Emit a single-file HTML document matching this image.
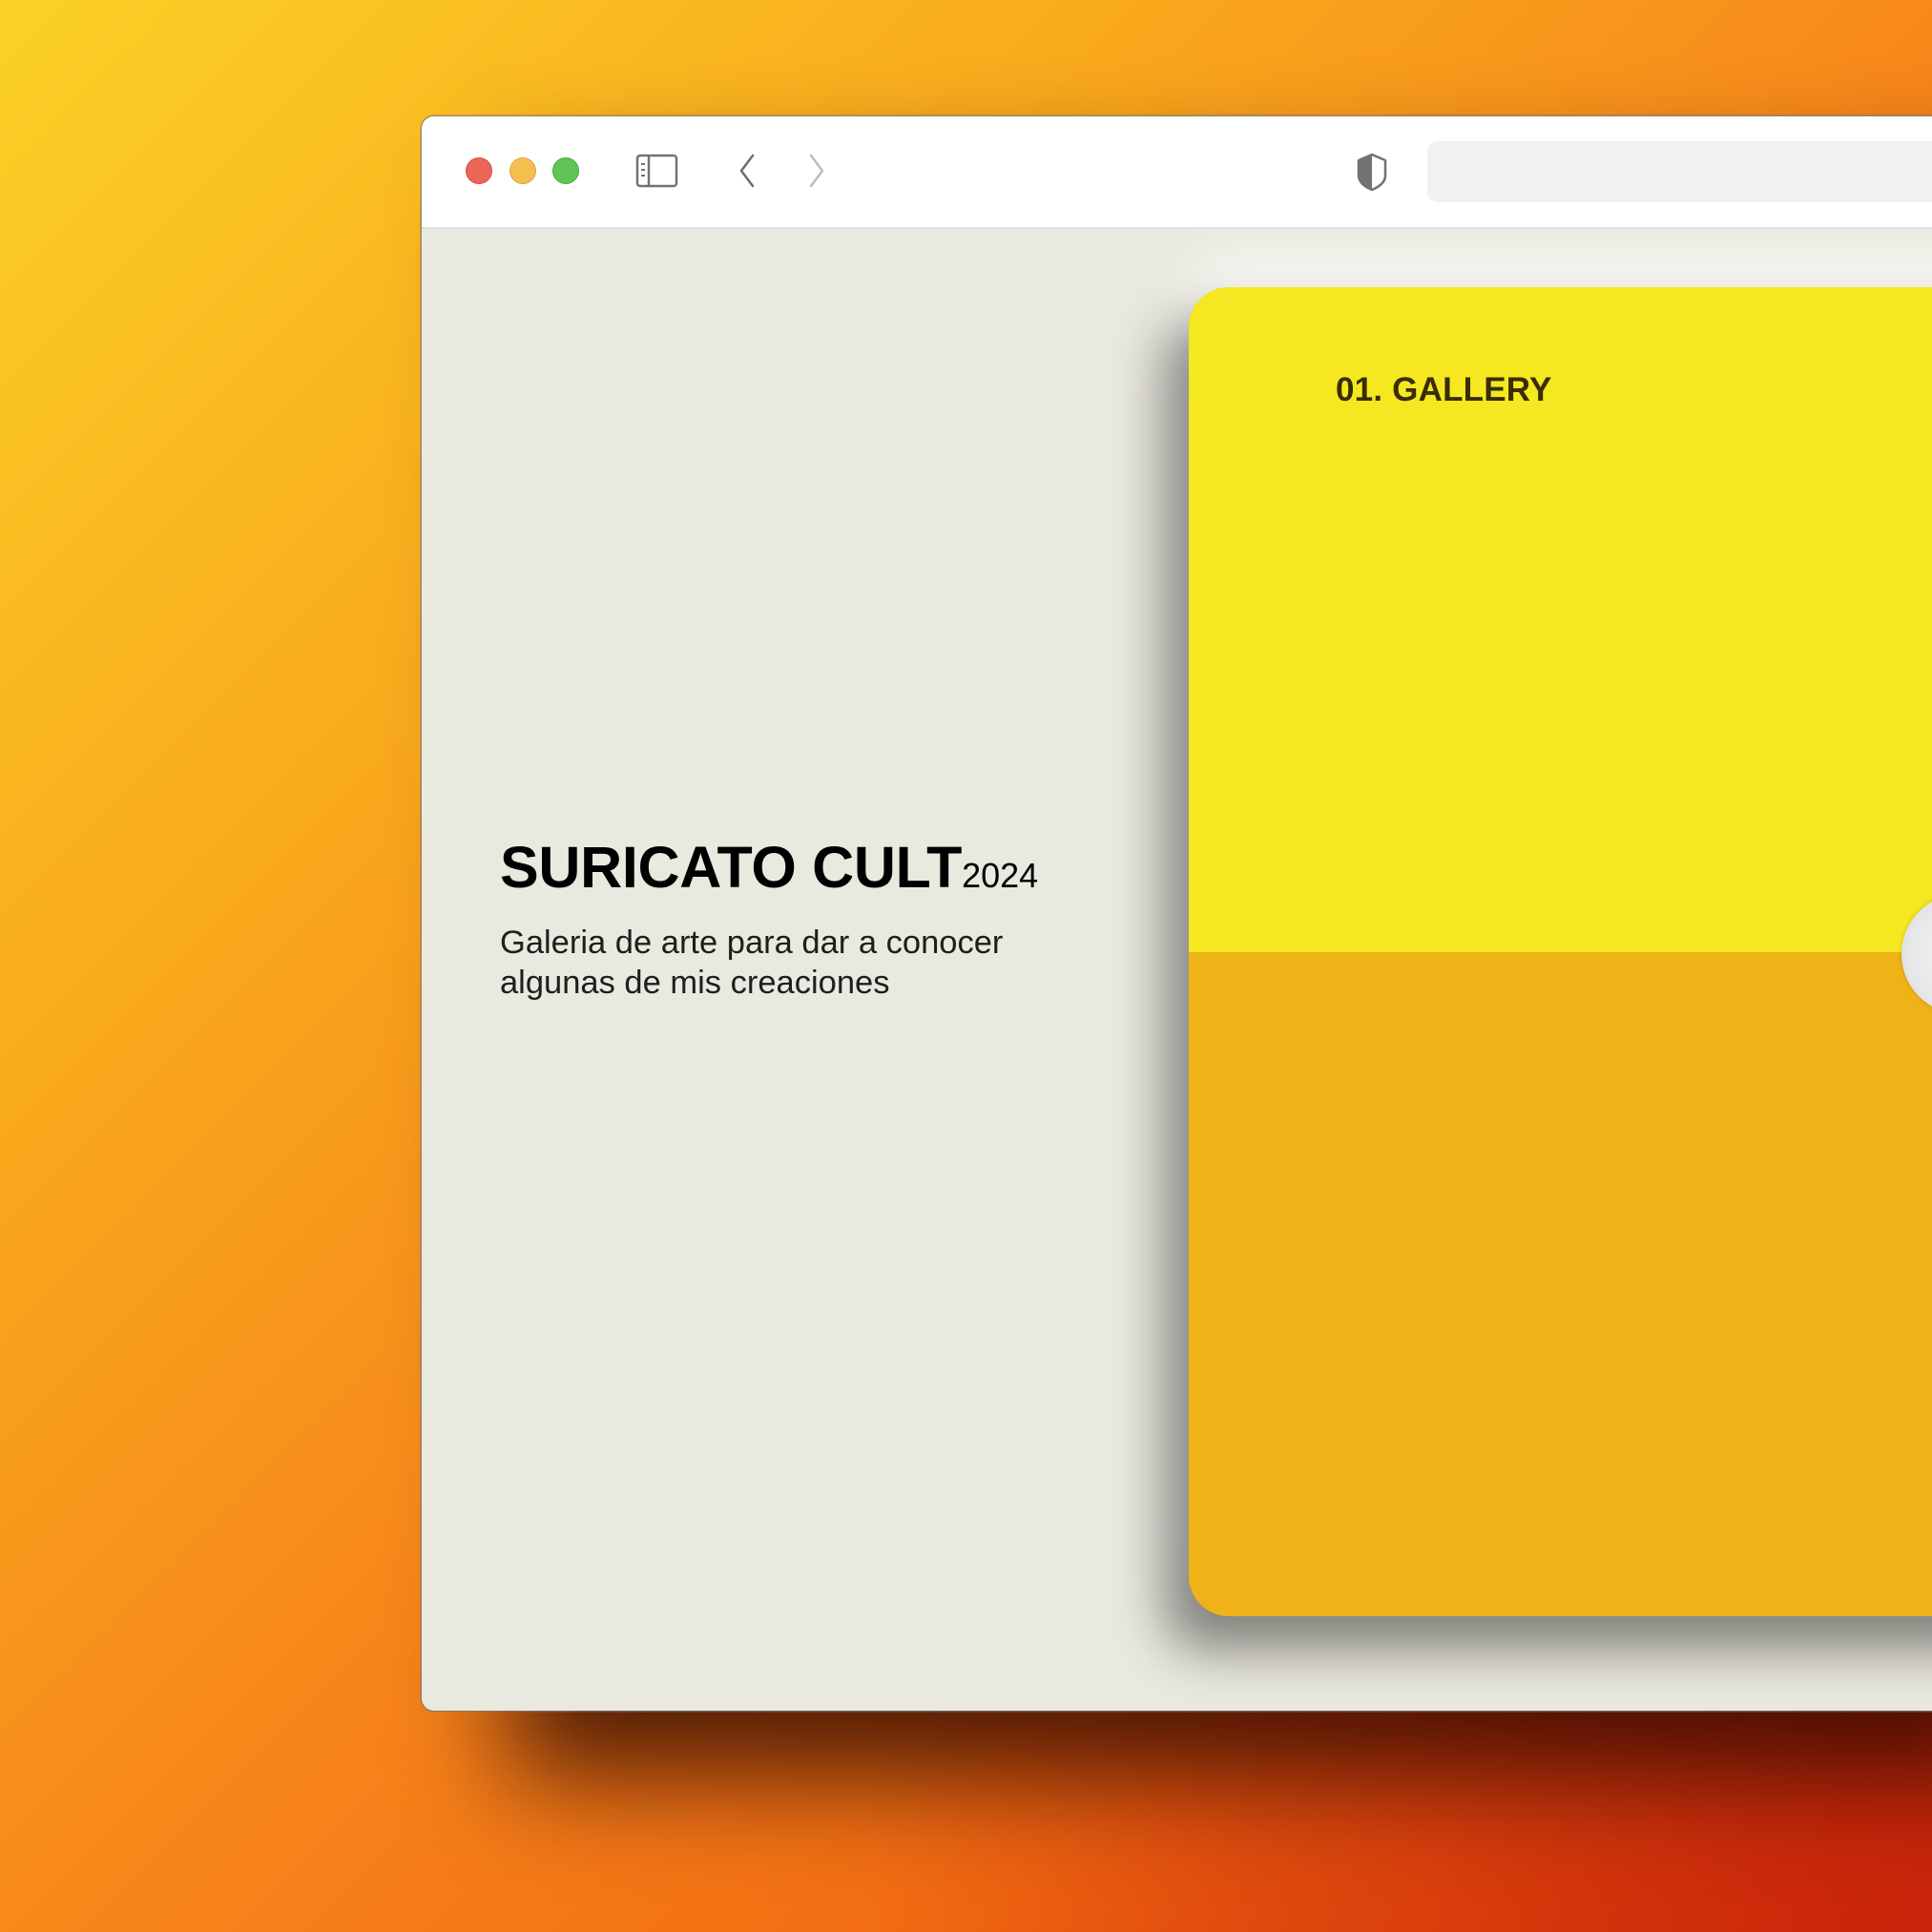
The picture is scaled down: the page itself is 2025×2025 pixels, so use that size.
<!DOCTYPE html>
<html><head><meta charset="utf-8"><style>
html,body{margin:0;padding:0;width:2025px;height:2025px;overflow:hidden}
body{position:relative;background:
radial-gradient(ellipse 1500px 1300px at 2025px 2025px,#c8240a 0%,rgba(210,50,10,.6) 35%,rgba(240,100,15,0) 75%),
linear-gradient(135deg,#fbd126 0%,#f9a81c 30%,#f7821a 55%,#f26b12 75%,#d8360c 100%);}
.win{position:absolute;left:442px;top:122px;width:1583px;height:1671px;border-radius:13px 0 0 13px;background:#eae9df;overflow:hidden;
box-shadow:0 0 0 1.5px rgba(120,120,120,.7),90px 70px 110px rgba(40,5,0,.8);}
.bar{position:absolute;left:0;top:0;right:0;height:116px;background:#fff;border-bottom:2px solid #dedede}
.card{position:absolute;left:804px;top:179px;width:1000px;height:1393px;border-radius:42px;overflow:hidden;background:#f0b317;
box-shadow:-25px 35px 55px rgba(0,0,0,.45),0 -30px 60px rgba(255,255,255,.7)}
.top{position:absolute;left:0;top:0;right:0;height:697px;background:#f5e820}
.g{position:absolute;left:154px;top:88px;font:bold 35px "Liberation Sans",sans-serif;color:#3a2d05;letter-spacing:0.2px}
.circ{position:absolute;left:1551px;top:815px;width:126px;height:126px;border-radius:50%;background:radial-gradient(circle at 60% 50%,#fafafa,#e6e6e6 70%,#cfcfcf);box-shadow:0 0 4px rgba(0,0,0,.2)}
.t{position:absolute;left:82px;top:752px;font:bold 61px "Liberation Sans",sans-serif;color:#000;white-space:nowrap;letter-spacing:-0.3px}
.t span{font-weight:normal;font-size:36px;letter-spacing:0}
.s{position:absolute;left:82px;top:845px;font:34.5px/42px "Liberation Sans",sans-serif;color:#1e1e1e;width:640px}
</style></head><body>
<div class="win">
<div class="bar">
<svg style="position:absolute;left:0;top:0" width="1583" height="116">
<circle cx="60" cy="57" r="13.5" fill="#ec6559" stroke="#d65047"/>
<circle cx="106" cy="57" r="13.5" fill="#f5bf4f" stroke="#dea33a"/>
<circle cx="151" cy="57" r="13.5" fill="#60c454" stroke="#4aa93e"/>
<rect x="226" y="41" width="41" height="32" rx="3" fill="none" stroke="#727272" stroke-width="2.5"/>
<line x1="238" y1="41" x2="238" y2="73" stroke="#727272" stroke-width="2.5"/>
<rect x="230" y="49" width="4" height="2" fill="#727272"/><rect x="230" y="55" width="4" height="2" fill="#727272"/><rect x="230" y="61" width="4" height="2" fill="#727272"/>
<path d="M347 41 L335 57 L347 73" fill="none" stroke="#6e6e6e" stroke-width="2.5" stroke-linecap="round" stroke-linejoin="round"/>
<path d="M408 41 L420 57 L408 73" fill="none" stroke="#bdbdbd" stroke-width="2.5" stroke-linecap="round" stroke-linejoin="round"/>
<path d="M996 40 L1010 46 L1010 62 Q1010 71 996 77 Q982 71 982 62 L982 46 Z" fill="none" stroke="#727272" stroke-width="2.5" stroke-linejoin="round"/>
<path d="M996 40 L982 46 L982 62 Q982 71 996 77 Z" fill="#727272"/>
<rect x="1054" y="26" width="700" height="64" rx="11" fill="#f1f1f1"/>
</svg>
</div>
<div class="card"><div class="top"></div><div class="g">01. GALLERY</div></div>
<div class="circ"></div>
<div class="t">SURICATO CULT<span>2024</span></div>
<div class="s">Galeria de arte para dar a conocer<br>algunas de mis creaciones</div>
</div>
</body></html>
